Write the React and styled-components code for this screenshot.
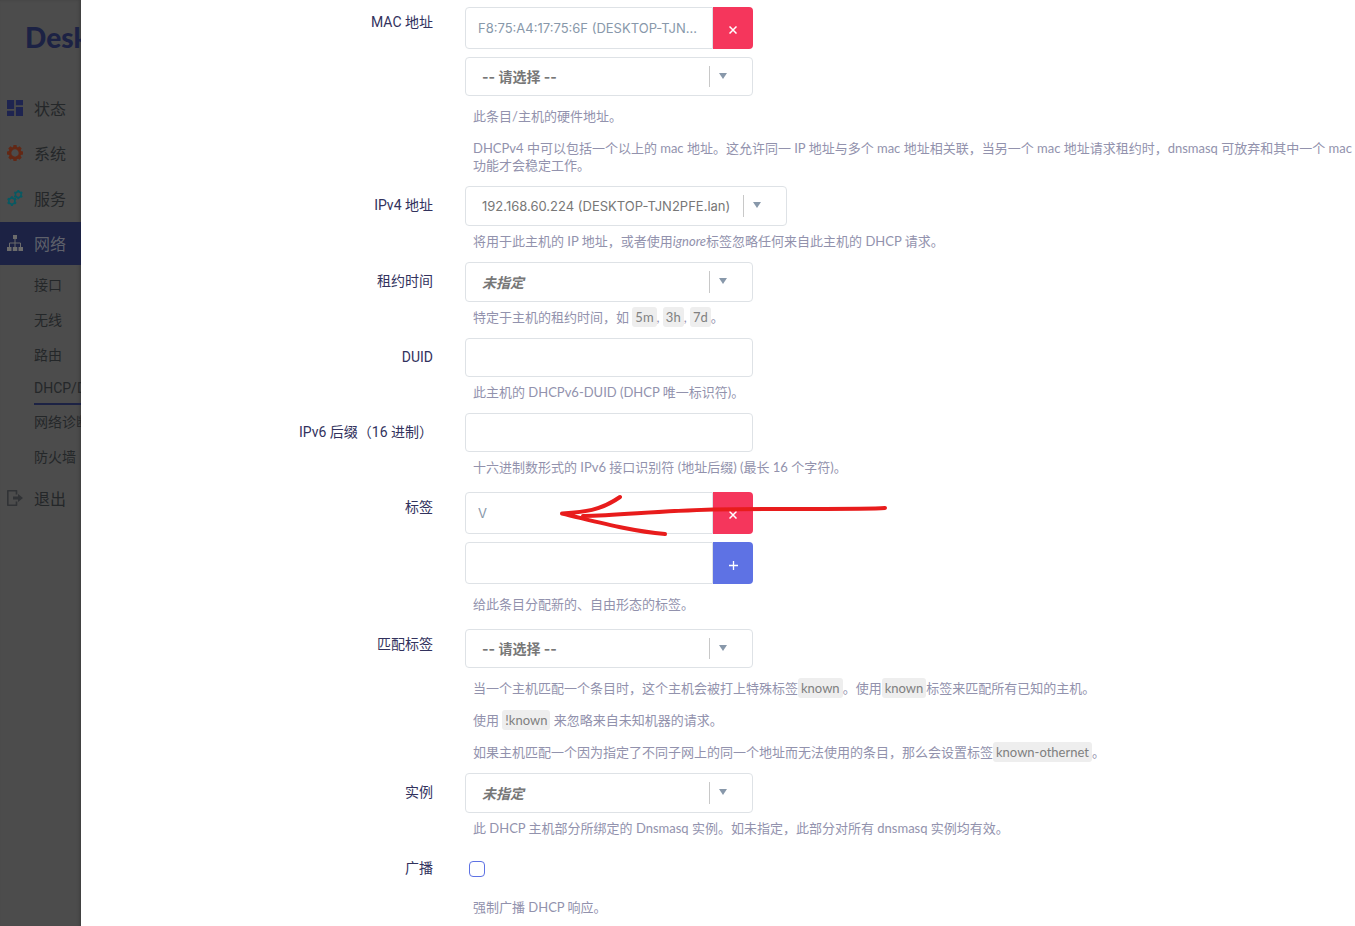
import React from "react";
import styled, { createGlobalStyle } from "styled-components";

const fonts = {
  text: `Lato, "Noto Sans CJK SC", sans-serif`,
  label: `Roboto, "Noto Sans CJK SC", sans-serif`,
  control: `Inter, "Noto Sans CJK SC", sans-serif`,
};

const colors = {
  primary: "#5e72e4",
  danger: "#f5365c",
  border: "#dee2e6",
  label: "#32325d",
  input: "#8898aa",
  select: "#777777",
  hint: "#9292ad",
  shade: "#4c4c4c",
  shadePrimary: "#1c2244",
  menuText: "#242729",
};

const GlobalStyle = createGlobalStyle`
  *, *::before, *::after {
    box-sizing: border-box;
  }

  body {
    margin: 0;
    background-color: #fff;
    font-family: ${fonts.text};
    font-size: 14px;
  }

  input, button, select {
    font-family: ${fonts.control};
    font-size: 13px;
  }
`;

const Page = styled.div`
  display: flex;
  min-height: 100vh;
  overflow: hidden;
`;

const Sidebar = styled.aside`
  flex: 0 0 81px;
  overflow: hidden;
  background-color: ${colors.shade};
  box-shadow: inset -2px 0 3px rgba(0, 0, 0, 0.15);
`;

const Brand = styled.a`
  display: block;
  height: 87px;
  padding: 19px 0 0 25px;
  color: ${colors.shadePrimary};
  font-size: 28px;
  font-weight: 900;
  line-height: 36px;
  text-decoration: none;
  white-space: nowrap;
`;

const Menu = styled.ul`
  display: flex;
  flex-direction: column;
  gap: 2px;
  margin: 0;
  padding: 0;
  list-style: none;
`;

const MenuLink = styled.a`
  display: flex;
  align-items: center;
  gap: 11px;
  height: 43px;
  padding: 0 0 2px 7px;
  background-color: ${({ $active }) =>
    $active ? colors.shadePrimary : "transparent"};
  color: ${({ $active }) => ($active ? "#5f616b" : colors.menuText)};
  font-size: 16px;
  text-decoration: none;
  white-space: nowrap;
`;

const MenuIcon = styled.svg`
  flex: 0 0 16px;
  width: 16px;
  height: 16px;
`;

const SubMenu = styled.ul`
  margin: 0;
  padding: 3px 0 0 34px;
  list-style: none;
`;

const SubMenuLink = styled.a`
  display: block;
  height: ${({ $active }) => ($active ? 32 : 35)}px;
  border-bottom: ${({ $active }) =>
    $active ? `2px solid ${colors.shadePrimary}` : "none"};
  color: ${colors.menuText};
  font-family: ${fonts.label};
  line-height: ${({ $active }) => ($active ? 30 : 35)}px;
  text-decoration: none;
  white-space: nowrap;
`;

const Form = styled.form`
  flex: 1 1 0;
  min-width: 0;
  padding-top: 3px;
`;

const Row = styled.div`
  display: grid;
  grid-template-columns: 352px minmax(0, 1fr);
  column-gap: 32px;
  padding-bottom: 12px;
`;

const Title = styled.label`
  color: ${colors.label};
  font-family: ${fonts.label};
  line-height: 38px;
  text-align: right;
`;

const Field = styled.div`
  position: relative;
`;

const DynList = styled.div`
  display: flex;
  flex-direction: column;
  align-items: flex-start;
  gap: 8px;
  padding: 4px 0 5px;
`;

const ListItem = styled.div`
  display: flex;
  width: 288px;
  height: 42px;
`;

const TextInput = styled.input`
  display: block;
  width: 288px;
  height: 39px;
  padding: 0 12px;
  border: 1px solid ${colors.border};
  border-radius: 4px;
  background-color: #fff;
  color: ${colors.input};
  outline: none;
`;

const ListInput = styled(TextInput)`
  flex: 1 1 0;
  min-width: 0;
  height: 42px;
  border-radius: 4px 0 0 4px;
`;

const ListButton = styled.button`
  display: flex;
  align-items: center;
  justify-content: center;
  flex: 0 0 40px;
  padding: 4px 0 0;
  border: 0;
  border-radius: 0 4px 4px 0;
  background-color: ${({ $color }) => $color};
`;

const SelectBox = styled.span`
  display: block;
  position: relative;
  width: fit-content;

  &::before {
    content: "";
    position: absolute;
    top: 9px;
    bottom: 9px;
    right: 43px;
    width: 1px;
    background-color: #c8c8c8;
  }

  &::after {
    content: "";
    position: absolute;
    top: 16px;
    right: 26px;
    border: solid transparent;
    border-width: 6px 4px 0;
    border-top-color: ${colors.input};
  }
`;

const StyledSelect = styled.select`
  display: block;
  min-width: 288px;
  height: ${({ $height }) => $height}px;
  padding: 0 55px 0 16px;
  border: 1px solid ${colors.border};
  border-radius: 4px;
  appearance: none;
  background-color: #fff;
  color: ${colors.select};
  font-size: ${({ $bold }) => ($bold ? 14 : 13)}px;
  font-style: ${({ $italic }) => ($italic ? "italic" : "normal")};
  font-weight: ${({ $bold }) => ($bold ? 700 : 400)};
  outline: none;
`;

const Checkbox = styled.input`
  display: block;
  appearance: none;
  width: 16px;
  height: 16px;
  margin: 12px 4px 22px;
  border: 1px solid ${colors.primary};
  border-radius: 4px;
  background-color: #fff;
`;

const Hint = styled.div`
  display: flex;
  flex-direction: column;
  gap: 15px;
  margin-top: 7px;
  padding-left: 8px;
  color: ${colors.hint};
  font-size: 13px;
  line-height: 17px;
  white-space: nowrap;

  p {
    margin: 0;
  }

  code {
    padding: 2px 3px;
    border-radius: 3px;
    background-color: #eeeeee;
    color: #808080;
    font-family: inherit;
  }
`;

const Arrow = styled.svg`
  position: absolute;
  top: 4px;
  left: 93px;
  width: 334px;
  height: 48px;
  pointer-events: none;
`;

const DashboardIcon = () => (
  <MenuIcon viewBox="3 3 18 18" fill="#1e2450">
    <path d="M3 13h8V3H3zM3 21h8v-6H3zM13 21h8V11h-8zM13 3v6h8V3z" />
  </MenuIcon>
);

const Gear = ({ cx, cy, r, teeth, color }) => (
  <g transform={`translate(${cx} ${cy}) scale(${r / 8})`}>
    <circle r="5" fill="none" stroke={color} strokeWidth="2.6" />
    {Array.from({ length: teeth }, (_, i) => (
      <path
        key={i}
        d="M-1.5 -8H1.5L2 -5.6H-2Z"
        fill={color}
        transform={`rotate(${(360 / teeth) * i})`}
      />
    ))}
  </g>
);

const SystemIcon = () => (
  <MenuIcon viewBox="0 0 16 16">
    <Gear cx={8} cy={8} r={8} teeth={8} color="#632815" />
  </MenuIcon>
);

const ServicesIcon = () => (
  <MenuIcon viewBox="0 0 16 16">
    <Gear cx={4.9} cy={11.1} r={4.9} teeth={6} color="#075a63" />
    <Gear cx={11.3} cy={4.6} r={4.6} teeth={6} color="#075a63" />
  </MenuIcon>
);

const NetworkIcon = () => (
  <MenuIcon viewBox="0 0 16 16" fill="#6b6b6b">
    <path d="M6 0h4v4H6zM0 12h4.5V16H0zM5.8 12h4.5V16H5.8zM11.5 12H16V16h-4.5z" />
    <path
      d="M8 4v8M2.5 12V8h11V12"
      fill="none"
      stroke="#6b6b6b"
      strokeWidth="1"
    />
  </MenuIcon>
);

const LogoutIcon = () => (
  <MenuIcon viewBox="0 0 16 16">
    <path
      d="M9.5 4.5V0.8H0.8v14.4h8.7V11.5"
      fill="none"
      stroke="#313336"
      strokeWidth="1.6"
      strokeLinejoin="round"
    />
    <path d="M6 6.6h5V4l5 4-5 4V9.4H6z" fill="#313336" />
  </MenuIcon>
);

const RemoveButton = ({ label }) => (
  <ListButton type="button" $color={colors.danger} aria-label={label}>
    <svg width="8" height="8" viewBox="0 0 8 8" stroke="#fff" strokeWidth="1.5">
      <path d="M0.5 0.5l7 7M7.5 0.5l-7 7" />
    </svg>
  </ListButton>
);

const AddButton = ({ label }) => (
  <ListButton type="button" $color={colors.primary} aria-label={label}>
    <svg width="9" height="9" viewBox="0 0 9 9" stroke="#fff" strokeWidth="1.3">
      <path d="M4.5 0v9M0 4.5h9" />
    </svg>
  </ListButton>
);

const Select = ({ id, text, height = 40, bold, italic, ariaLabel }) => (
  <SelectBox>
    <StyledSelect
      id={id}
      $height={height}
      $bold={bold}
      $italic={italic}
      aria-label={ariaLabel}
    >
      <option>{text}</option>
    </StyledSelect>
  </SelectBox>
);

const menuItems = [
  { name: "状态", Icon: DashboardIcon },
  { name: "系统", Icon: SystemIcon },
  { name: "服务", Icon: ServicesIcon },
  {
    name: "网络",
    Icon: NetworkIcon,
    active: true,
    children: ["接口", "无线", "路由", "DHCP/DNS", "网络诊断", "防火墙"],
  },
  { name: "退出", Icon: LogoutIcon },
];

function Navigation() {
  return (
    <Sidebar>
      <Brand href="#">Desk</Brand>
      <Menu>
        {menuItems.map(({ name, Icon, active, children }) => (
          <li key={name}>
            <MenuLink href="#" $active={active}>
              <Icon />
              {name}
            </MenuLink>
            {children && (
              <SubMenu>
                {children.map((child) => (
                  <li key={child}>
                    <SubMenuLink href="#" $active={child === "DHCP/DNS"}>
                      {child}
                    </SubMenuLink>
                  </li>
                ))}
              </SubMenu>
            )}
          </li>
        ))}
      </Menu>
    </Sidebar>
  );
}

function FormRow({ id, title, children }) {
  return (
    <Row>
      <Title htmlFor={id}>{title}</Title>
      <Field>{children}</Field>
    </Row>
  );
}

export default function App() {
  return (
    <Page>
      <GlobalStyle />
      <Navigation />
      <Form>
        <FormRow id="mac" title="MAC 地址">
          <DynList>
            <ListItem>
              <ListInput
                id="mac"
                readOnly
                value="F8:75:A4:17:75:6F (DESKTOP-TJN..."
              />
              <RemoveButton label="删除 MAC 地址" />
            </ListItem>
            <Select
              text="-- 请选择 --"
              height={39}
              bold
              ariaLabel="添加 MAC 地址"
            />
          </DynList>
          <Hint>
            <p>此条目/主机的硬件地址。</p>
            <p>
              DHCPv4 中可以包括一个以上的 mac 地址。这允许同一 IP 地址与多个 mac
              地址相关联，当另一个 mac 地址请求租约时，dnsmasq
              可放弃和其中一个 mac
              <br />
              功能才会稳定工作。
            </p>
          </Hint>
        </FormRow>

        <FormRow id="ipv4" title="IPv4 地址">
          <Select id="ipv4" text="192.168.60.224 (DESKTOP-TJN2PFE.lan)" />
          <Hint>
            <p>
              将用于此主机的 IP 地址，或者使用<em>ignore</em>
              标签忽略任何来自此主机的 DHCP 请求。
            </p>
          </Hint>
        </FormRow>

        <FormRow id="leasetime" title="租约时间">
          <Select id="leasetime" text="未指定" bold italic />
          <Hint>
            <p>
              特定于主机的租约时间，如 <code>5m</code>, <code>3h</code>,{" "}
              <code>7d</code>。
            </p>
          </Hint>
        </FormRow>

        <FormRow id="duid" title="DUID">
          <TextInput id="duid" />
          <Hint>
            <p>此主机的 DHCPv6-DUID (DHCP 唯一标识符)。</p>
          </Hint>
        </FormRow>

        <FormRow id="hostid" title="IPv6 后缀（16 进制）">
          <TextInput id="hostid" />
          <Hint>
            <p>十六进制数形式的 IPv6 接口识别符 (地址后缀) (最长 16 个字符)。</p>
          </Hint>
        </FormRow>

        <FormRow id="tag" title="标签">
          <DynList>
            <ListItem>
              <ListInput id="tag" readOnly value="V" />
              <RemoveButton label="删除标签" />
            </ListItem>
            <ListItem>
              <ListInput aria-label="新标签" />
              <AddButton label="添加标签" />
            </ListItem>
          </DynList>
          <Arrow
            viewBox="558 492 334 48"
            fill="none"
            stroke="#e81c1c"
            strokeWidth="4"
            strokeLinecap="round"
            strokeLinejoin="round"
          >
            <path d="M885 508C862 509.5 800 508.5 713 509.5C655 511 620 515.5 583 516" />
            <path d="M620 497C600 511 584 512 562 513.5C598 522 630 531 665 534" />
          </Arrow>
          <Hint>
            <p>给此条目分配新的、自由形态的标签。</p>
          </Hint>
        </FormRow>

        <FormRow id="matchtag" title="匹配标签">
          <DynList>
            <Select id="matchtag" text="-- 请选择 --" height={39} bold />
          </DynList>
          <Hint>
            <p>
              当一个主机匹配一个条目时，这个主机会被打上特殊标签
              <code>known</code>。使用<code>known</code>
              标签来匹配所有已知的主机。
            </p>
            <p>
              使用 <code>!known</code> 来忽略来自未知机器的请求。
            </p>
            <p>
              如果主机匹配一个因为指定了不同子网上的同一个地址而无法使用的条目，那么会设置标签
              <code>known-othernet</code>。
            </p>
          </Hint>
        </FormRow>

        <FormRow id="instance" title="实例">
          <Select id="instance" text="未指定" bold italic />
          <Hint>
            <p>
              此 DHCP 主机部分所绑定的 Dnsmasq 实例。如未指定，此部分对所有
              dnsmasq 实例均有效。
            </p>
          </Hint>
        </FormRow>

        <FormRow id="broadcast" title="广播">
          <Checkbox id="broadcast" type="checkbox" />
          <Hint>
            <p>强制广播 DHCP 响应。</p>
          </Hint>
        </FormRow>
      </Form>
    </Page>
  );
}
